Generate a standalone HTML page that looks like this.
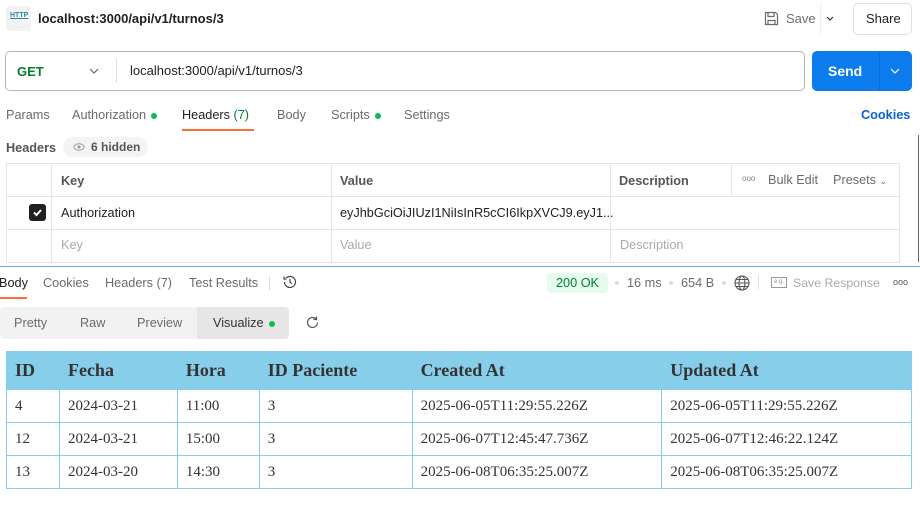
<!DOCTYPE html>
<html><head><meta charset="utf-8"><style>
*{margin:0;padding:0;box-sizing:border-box}
body{width:920px;height:513px;overflow:hidden;background:#fff;font-family:"Liberation Sans",Arial,sans-serif;font-size:12.7px;color:#212121;position:relative}
.a{position:absolute;white-space:nowrap}
.g{color:#6b6b6b}
.dot{display:inline-block;width:6px;height:6px;border-radius:50%;background:#0cbb52;margin-left:5px;vertical-align:middle}
.ht{position:absolute;left:6px;top:163px;width:894px;height:100px;border:1px solid #e6e6e6}
.ht .v{position:absolute;top:0;bottom:0;width:1px;background:#e6e6e6}
.ht .h{position:absolute;left:0;right:0;height:1px;background:#e6e6e6}
table.t{position:absolute;left:6px;top:351px;width:906px;border-collapse:collapse;font-family:"Liberation Serif",serif;color:#333}
.t th{background:#87ceeb;height:38px;text-align:left;font-size:18px;font-weight:bold;padding:0 8px;border:1px solid #87ceeb;color:#333}
.t td{height:33px;border:1px solid #87ceeb;padding:0 8px;font-size:15px}
</style></head><body>
<div class="a" style="left:6px;top:6px;width:25px;height:25px;border-radius:4px;background:#f2f2f2"></div>
<div class="a" style="left:10px;top:12px;font-size:7px;font-weight:bold;color:#2a8aa0;text-decoration:underline">HTTP</div>
<div class="a" style="left:38px;top:11px;font-size:13px;font-weight:bold;color:#212121">localhost:3000/api/v1/turnos/3</div>
<svg class="a" style="left:764px;top:11px" width="15" height="15" viewBox="0 0 15 15" fill="none" stroke="#6b6b6b" stroke-width="1.2"><path d="M1.5 1.5h10l2 2v10h-12z"/><path d="M4 1.5v4h6v-4"/><path d="M4 13.5v-4h7v4"/></svg>
<div class="a g" style="left:786px;top:11px;font-size:13px">Save</div>
<div class="a" style="left:820px;top:4px;width:1px;height:30px;background:#eee"></div>
<svg class="a" style="left:825px;top:15px" width="10" height="8" viewBox="0 0 10 8"><path d="M2 2l3 3 3-3" stroke="#333" fill="none" stroke-width="1.2"/></svg>
<div class="a" style="left:853px;top:3px;width:59px;height:32px;border:1px solid #e0e0e0;border-radius:5px"></div>
<div class="a" style="left:866px;top:11px;font-size:13px">Share</div>
<div class="a" style="left:5px;top:51px;width:800px;height:40px;border:1px solid #b5b5b5;border-radius:5px"></div>
<div class="a" style="left:17px;top:64px;font-weight:bold;color:#007f31;font-size:13px">GET</div>
<svg class="a" style="left:89px;top:67px" width="10" height="8" viewBox="0 0 10 8"><path d="M1 2l4 4 4-4" stroke="#666" fill="none" stroke-width="1.2"/></svg>
<div class="a" style="left:116px;top:59px;width:1px;height:24px;background:#e0e0e0"></div>
<div class="a" style="left:130px;top:63px;font-size:13px">localhost:3000/api/v1/turnos/3</div>
<div class="a" style="left:812px;top:51px;width:100px;height:40px;background:#0c7ced;border-radius:5px"></div>
<div class="a" style="left:879px;top:51px;width:1px;height:40px;background:#0a6fd6"></div>
<div class="a" style="left:828px;top:63px;color:#fff;font-weight:bold;font-size:14px">Send</div>
<svg class="a" style="left:890px;top:67px" width="10" height="8" viewBox="0 0 10 8"><path d="M1 2l4 4 4-4" stroke="#fff" fill="none" stroke-width="1.2"/></svg>
<div class="a g" style="left:6px;top:108px">Params</div>
<div class="a g" style="left:72px;top:108px">Authorization<span class="dot"></span></div>
<div class="a" style="left:182px;top:108px">Headers <span style="color:#007f31">(7)</span></div>
<div class="a" style="left:182px;top:129px;width:72px;height:2px;background:#ff6c37"></div>
<div class="a g" style="left:277px;top:108px">Body</div>
<div class="a g" style="left:331px;top:108px">Scripts<span class="dot"></span></div>
<div class="a g" style="left:404px;top:108px">Settings</div>
<div class="a" style="left:861px;top:108px;color:#0b64d1;font-weight:bold">Cookies</div>
<div class="a" style="left:6px;top:141px;font-weight:bold;color:#555">Headers</div>
<div class="a" style="left:63px;top:137px;width:85px;height:20px;border-radius:10px;background:#f4f4f4"></div>
<svg class="a" style="left:73px;top:143px" width="12" height="8" viewBox="0 0 12 8"><ellipse cx="6" cy="4" rx="5" ry="3.2" fill="none" stroke="#999"/><circle cx="6" cy="4" r="1.5" fill="#999"/></svg>
<div class="a" style="left:91px;top:140px;font-size:12px;font-weight:bold;color:#555">6 hidden</div>
<div class="a" style="left:918px;top:135px;width:1px;height:127px;background:#666"></div>
<div class="ht">
<div class="v" style="left:44px"></div><div class="v" style="left:324px"></div><div class="v" style="left:603px"></div><div class="v" style="left:724px;height:33px"></div>
<div class="h" style="top:32px"></div><div class="h" style="top:65px"></div>
</div>
<div class="a" style="left:61px;top:174px;font-weight:bold;color:#555">Key</div>
<div class="a" style="left:340px;top:174px;font-weight:bold;color:#555">Value</div>
<div class="a" style="left:619px;top:174px;font-weight:bold;color:#555">Description</div>
<div class="a" style="left:742px;top:174px;font-size:8px;color:#888">ooo</div>
<div class="a g" style="left:768px;top:173px">Bulk Edit</div>
<div class="a g" style="left:833px;top:173px">Presets <span style="font-size:9px">⌄</span></div>
<div class="a" style="left:29px;top:204px;width:17px;height:17px;background:#212121;border-radius:3px"></div>
<svg class="a" style="left:31px;top:206px" width="13" height="13" viewBox="0 0 13 13"><path d="M3 6.5l2.5 2.5 4.5-5" stroke="#fff" stroke-width="2" fill="none"/></svg>
<div class="a" style="left:61px;top:206px">Authorization</div>
<div class="a" style="left:340px;top:206px">eyJhbGciOiJIUzI1NiIsInR5cCI6IkpXVCJ9.eyJ1...</div>
<div class="a" style="left:61px;top:238px;color:#aaa">Key</div>
<div class="a" style="left:340px;top:238px;color:#aaa">Value</div>
<div class="a" style="left:620px;top:238px;color:#aaa">Description</div>
<div class="a" style="left:0;top:266px;width:920px;height:1px;background:#6fa8f0"></div>
<div class="a" style="left:-1px;top:276px">Body</div>
<div class="a" style="left:0;top:297px;width:27px;height:2px;background:#ff6c37"></div>
<div class="a g" style="left:43px;top:276px">Cookies</div>
<div class="a g" style="left:105px;top:276px">Headers (7)</div>
<div class="a g" style="left:189px;top:276px">Test Results</div>
<div class="a" style="left:269px;top:276px;width:1px;height:14px;background:#ddd"></div>
<svg class="a" style="left:282px;top:274px" width="16" height="16" viewBox="0 0 16 16" fill="none" stroke="#444" stroke-width="1.2"><path d="M2.5 8a5.5 5.5 0 1 0 1.6-3.9"/><path d="M2 2.5v2.5h2.5"/><path d="M8 5v3.2l2 1.5"/></svg>
<div class="a" style="left:547px;top:273px;width:61px;height:20px;background:#e5fbee;border-radius:4px"></div>
<div class="a" style="left:556px;top:276px;color:#007f31">200 OK</div>
<div class="a" style="left:615px;top:281px;width:4px;height:4px;border-radius:2px;background:#ddd"></div>
<div class="a g" style="left:627px;top:276px">16 ms</div>
<div class="a" style="left:669px;top:281px;width:4px;height:4px;border-radius:2px;background:#ddd"></div>
<div class="a g" style="left:681px;top:276px">654 B</div>
<div class="a" style="left:722px;top:281px;width:4px;height:4px;border-radius:2px;background:#ddd"></div>
<svg class="a" style="left:734px;top:275px" width="16" height="16" viewBox="0 0 16 16" fill="none" stroke="#555" stroke-width="1.1"><circle cx="8" cy="8" r="7"/><ellipse cx="8" cy="8" rx="3" ry="7"/><path d="M1 8h14M2 4.5h12M2 11.5h12"/></svg>
<div class="a" style="left:758px;top:275px;width:1px;height:14px;background:#ddd"></div>
<div class="a" style="left:771px;top:277px;width:16px;height:11px;border:1px solid #999;font-size:6px;color:#999;line-height:9px;text-align:center">e.g.</div>
<div class="a" style="left:793px;top:276px;color:#aaa;font-size:12.3px">Save Response</div>
<div class="a" style="left:893px;top:277px;font-size:9px;color:#555">ooo</div>
<div class="a" style="left:0;top:307px;width:289px;height:32px;background:#f2f2f2;border-radius:4px"></div>
<div class="a" style="left:197px;top:307px;width:92px;height:32px;background:#e6e6e6;border-radius:0 4px 4px 0"></div>
<div class="a g" style="left:14px;top:316px">Pretty</div>
<div class="a g" style="left:80px;top:316px">Raw</div>
<div class="a g" style="left:137px;top:316px">Preview</div>
<div class="a" style="left:213px;top:316px;color:#333">Visualize<span class="dot"></span></div>
<svg class="a" style="left:305px;top:315px" width="15" height="15" viewBox="0 0 15 15" fill="none" stroke="#555" stroke-width="1.2"><path d="M12.5 7.5a5 5 0 1 1-1.5-3.6"/><path d="M11.5 1.5v3h-3"/></svg>
<table class="t">
<colgroup><col style="width:53px"><col style="width:118px"><col style="width:82px"><col style="width:153px"><col style="width:250px"><col style="width:250px"></colgroup>
<tr><th>ID</th><th>Fecha</th><th>Hora</th><th>ID Paciente</th><th>Created At</th><th>Updated At</th></tr>
<tr><td>4</td><td>2024-03-21</td><td>11:00</td><td>3</td><td>2025-06-05T11:29:55.226Z</td><td>2025-06-05T11:29:55.226Z</td></tr>
<tr><td>12</td><td>2024-03-21</td><td>15:00</td><td>3</td><td>2025-06-07T12:45:47.736Z</td><td>2025-06-07T12:46:22.124Z</td></tr>
<tr><td>13</td><td>2024-03-20</td><td>14:30</td><td>3</td><td>2025-06-08T06:35:25.007Z</td><td>2025-06-08T06:35:25.007Z</td></tr>
</table>
</body></html>
